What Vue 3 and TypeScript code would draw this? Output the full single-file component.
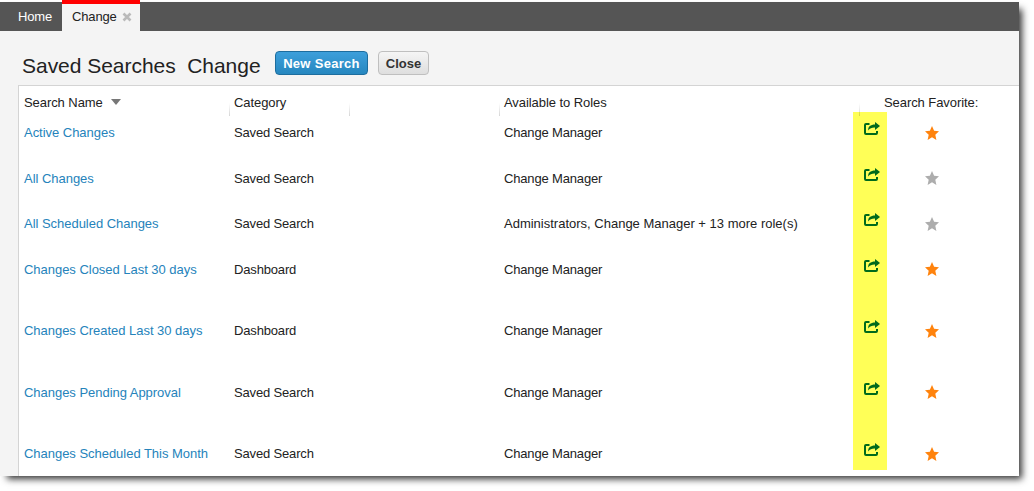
<script setup lang="ts">
interface SavedSearch {
  name: string
  category: string
  roles: string
  favorite: boolean
  size: string
}

const searches: SavedSearch[] = [
  { name: 'Active Changes', category: 'Saved Search', roles: 'Change Manager', favorite: true, size: 'r46' },
  { name: 'All Changes', category: 'Saved Search', roles: 'Change Manager', favorite: false, size: 'r45 raised' },
  { name: 'All Scheduled Changes', category: 'Saved Search', roles: 'Administrators, Change Manager + 13 more role(s)', favorite: false, size: 'r46 mixed' },
  { name: 'Changes Closed Last 30 days', category: 'Dashboard', roles: 'Change Manager', favorite: true, size: 'r61 raised' },
  { name: 'Changes Created Last 30 days', category: 'Dashboard', roles: 'Change Manager', favorite: true, size: 'r62' },
  { name: 'Changes Pending Approval', category: 'Saved Search', roles: 'Change Manager', favorite: true, size: 'r61 raised' },
  { name: 'Changes Scheduled This Month', category: 'Saved Search', roles: 'Change Manager', favorite: true, size: 'last' },
]
</script>

<template>
  <div class="page">
    <div class="window">
      <nav class="tabs">
        <div class="tab home">Home</div>
        <div class="tab active">
          <span>Change</span>
          <svg class="x" width="10" height="10" viewBox="0 0 10 10"><path d="M1.500 1.500L8.500 8.500M8.500 1.500L1.500 8.500" stroke="#bababa" stroke-width="2.6" /></svg>
        </div>
      </nav>
      <header class="heading">
        <h1><span>Saved Searches</span><span class="sub">Change</span></h1>
        <button class="btn primary">New Search</button>
        <button class="btn plain">Close</button>
      </header>
      <main class="panel">
        <div class="highlight"></div>
        <div class="row head">
          <div class="cell">Search Name<i class="sort"></i></div>
          <div class="cell div">Category</div>
          <div class="cell div"></div>
          <div class="cell div">Available to Roles</div>
          <div class="cell div fav-title">Search Favorite:</div>
        </div>
        <div v-for="s in searches" :key="s.name" class="row" :class="s.size">
          <div class="cell"><a>{{ s.name }}</a></div>
          <div class="cell tight">{{ s.category }}</div>
          <div class="cell"></div>
          <div class="cell roles">{{ s.roles }}</div>
          <div class="cell icons">
            <svg class="share" width="16" height="14" viewBox="0 0 16 14">
              <path d="M5.500 2H2Q1 2 1 3V11Q1 12 2 12H12Q13 12 13 11V9" fill="none" stroke="#006a1c" stroke-width="2" />
              <path d="M11 0L16 4L11 8V5.600C8 5.500 6 6.200 4.200 8.400C4 4.500 6.500 2.600 11 2.500Z" fill="#006a1c" />
            </svg>
            <svg class="star" width="14" height="14" viewBox="0 0 14 14">
              <path d="M7 0L9.100 4.800L14 5.300L10.300 8.700L11.400 14L7 11.200L2.600 14L3.700 8.700L0 5.300L4.900 4.800Z" :fill="s.favorite ? '#ff830d' : '#adadad'" />
            </svg>
          </div>
        </div>
      </main>
    </div>
  </div>
</template>

<style>
body { margin: 0; background: #fff; }
</style>

<style scoped>
.page {
  box-sizing: border-box;
  width: 1034px;
  height: 491px;
  padding-top: 2px;
  overflow: hidden;
  background: #fff;
  font: 13px/16px "Liberation Sans", Arial, sans-serif;
  color: #222;
}
.window {
  width: 1019px;
  height: 474px;
  display: flex;
  flex-direction: column;
  background: #f4f4f4;
  box-shadow: 5px 5px 7px -2px rgba(0, 0, 0, 0.8);
}
.tabs { display: flex; height: 29px; background: #555; flex: none; }
.tab { box-sizing: border-box; height: 29px; padding-top: 7px; letter-spacing: -0.15px; }
.home { width: 62px; padding-left: 18px; color: #fff; }
.active {
  display: flex;
  align-items: flex-start;
  width: 78px;
  height: 31px;
  margin-top: -2px;
  padding: 5px 0 0 10px;
  border-top: 4px solid #f00;
  background: #f4f4f4;
}
.x { margin: 3px 0 0 5px; }
.heading { display: flex; height: 54px; flex: none; align-items: flex-start; padding-left: 22px; }
h1 { width: 253px; margin: 22px 0 0; font-size: 21px; line-height: 26px; font-weight: 400; letter-spacing: -0.03px; white-space: nowrap; }
.sub { margin-left: 11.500px; }
.btn {
  box-sizing: border-box;
  height: 24px;
  margin: 20px 10px 0 0;
  padding: 0;
  border-radius: 4px;
  font: bold 13px/20px "Liberation Sans", Arial, sans-serif;
}
.primary { width: 93px; border: 1px solid #1d6d9e; background: linear-gradient(#3d9fdb, #2687bf); color: #fff; letter-spacing: 0.3px; padding-top: 1px; }
.plain { width: 51px; border: 1px solid #bfbfbf; background: linear-gradient(#f5f5f5, #dedede); color: #333; padding-top: 1px; }
.panel {
  position: relative;
  flex: 1;
  margin-left: 18px;
  border: solid #d4d4d4;
  border-width: 1px 0 0 1px;
  background: #fff;
}
.highlight { position: absolute; left: 834px; top: 26px; width: 34px; height: 358px; background: #ffff57; }
.row {
  position: relative;
  display: grid;
  grid-template-columns: 210px 120px 150px 360px 160px;
}
.cell { padding: 1px 0 0 5px; white-space: nowrap; letter-spacing: -0.03px; }
.head { height: 30px; margin-bottom: 8px; }
.head .cell { padding-top: 9px; letter-spacing: -0.07px; }
.tight, .roles { letter-spacing: -0.16px; }
.mixed .roles { letter-spacing: 0; }
.div {
  background: linear-gradient(rgba(0, 0, 0, 0), rgba(0, 0, 0, 0.16)) 0 100% / 1px 13px no-repeat;
}
.head .fav-title { padding-left: 25px; }
.sort {
  display: inline-block;
  margin-left: 8px;
  vertical-align: 2px;
  border: solid transparent;
  border-width: 6px 5px 0;
  border-top-color: #777;
}
.r45 { height: 45px; }
.r46 { height: 46px; }
.r61 { height: 61px; }
.r62 { height: 62px; }
.last { height: 20px; }
a { color: #2583bb; }
.icons { display: flex; align-items: flex-start; padding-top: 0; }
.share { margin-top: -2px; }
.star { margin: 2px 0 0 45px; }
.raised .star { margin-top: 1px; }
</style>
